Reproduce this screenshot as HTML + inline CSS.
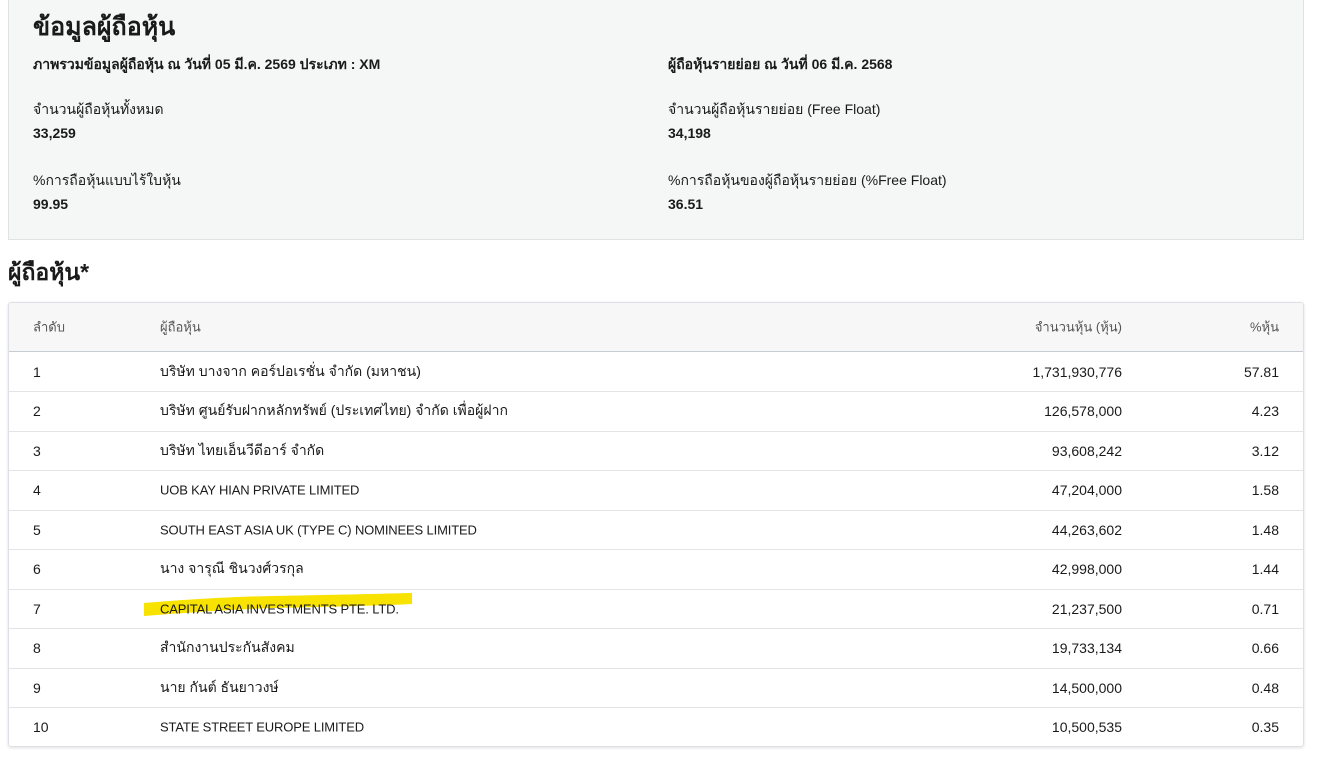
<!DOCTYPE html>
<html><head><meta charset="utf-8"><style>
body{margin:0;width:1330px;height:763px;background:#fff;font-family:"Liberation Sans","Noto Sans CJK SC",sans-serif;color:#1a1a1a;position:relative;overflow:hidden}
.box{position:absolute;left:8px;top:-2px;width:1294px;height:240px;background:#f5f6f6;border:1px solid #e0e2e4}
.t{position:absolute;white-space:nowrap}
.h1{font-size:25px;font-weight:bold}
.b{font-size:14px;font-weight:bold}
.n{font-size:14px}
.tbl{position:absolute;left:8px;top:302px;width:1294px;height:443px;border:1px solid #dde1e6;border-radius:3px;box-shadow:0 1px 3px rgba(0,0,0,.12);overflow:hidden}
.hd{position:absolute;left:0;top:0;width:100%;height:48px;background:#f7f7f8;border-bottom:1px solid #c6ccd4}
.row{position:absolute;left:0;width:100%;height:39px;border-bottom:1px solid #e2e4e7;font-size:14px}
.row span,.hd span{position:absolute;top:50%;transform:translateY(-50%);white-space:nowrap}
.hd span{font-size:13px;color:#555}
.c1{left:24px}.c2{left:151px}.c3{right:181px}.c4{right:24px}
.l{font-size:13px;letter-spacing:-0.15px}
</style></head><body>
<div class="box"></div>
<div class="t h1" style="left:33px;top:7px">ข้อมูลผู้ถือหุ้น</div>
<div class="t b" style="left:33px;top:54px">ภาพรวมข้อมูลผู้ถือหุ้น ณ วันที่ 05 มี.ค. 2569 ประเภท : XM</div>
<div class="t n" style="left:33px;top:99px">จำนวนผู้ถือหุ้นทั้งหมด</div>
<div class="t b" style="left:33px;top:125px">33,259</div>
<div class="t n" style="left:33px;top:170px">%การถือหุ้นแบบไร้ใบหุ้น</div>
<div class="t b" style="left:33px;top:196px">99.95</div>
<div class="t b" style="left:668px;top:54px">ผู้ถือหุ้นรายย่อย ณ วันที่ 06 มี.ค. 2568</div>
<div class="t n" style="left:668px;top:99px">จำนวนผู้ถือหุ้นรายย่อย (Free Float)</div>
<div class="t b" style="left:668px;top:125px">34,198</div>
<div class="t n" style="left:668px;top:170px">%การถือหุ้นของผู้ถือหุ้นรายย่อย (%Free Float)</div>
<div class="t b" style="left:668px;top:196px">36.51</div>
<div class="t h1" style="left:8px;top:255px;font-size:23px">ผู้ถือหุ้น*</div>
<div class="tbl">
<div class="hd"><span class="c1">ลำดับ</span><span class="c2">ผู้ถือหุ้น</span><span class="c3">จำนวนหุ้น (หุ้น)</span><span class="c4">%หุ้น</span></div>
<div class="row" style="top:49px"><span class="c1">1</span><span class="c2">บริษัท บางจาก คอร์ปอเรชั่น จำกัด (มหาชน)</span><span class="c3">1,731,930,776</span><span class="c4">57.81</span></div>
<div class="row" style="top:88.5px"><span class="c1">2</span><span class="c2">บริษัท ศูนย์รับฝากหลักทรัพย์ (ประเทศไทย) จำกัด เพื่อผู้ฝาก</span><span class="c3">126,578,000</span><span class="c4">4.23</span></div>
<div class="row" style="top:128px"><span class="c1">3</span><span class="c2">บริษัท ไทยเอ็นวีดีอาร์ จำกัด</span><span class="c3">93,608,242</span><span class="c4">3.12</span></div>
<div class="row" style="top:167.5px"><span class="c1">4</span><span class="c2 l">UOB KAY HIAN PRIVATE LIMITED</span><span class="c3">47,204,000</span><span class="c4">1.58</span></div>
<div class="row" style="top:207px"><span class="c1">5</span><span class="c2 l">SOUTH EAST ASIA UK (TYPE C) NOMINEES LIMITED</span><span class="c3">44,263,602</span><span class="c4">1.48</span></div>
<div class="row" style="top:246.5px"><span class="c1">6</span><span class="c2">นาง จารุณี ชินวงศ์วรกุล</span><span class="c3">42,998,000</span><span class="c4">1.44</span></div>
<div class="row" style="top:286px"><svg style="position:absolute;left:133px;top:3px" width="272" height="26"><path d="M2 11 C40 8 80 5 130 4 C180 3 230 2 270 1 L270 12 C230 14 180 15 130 16 C80 18 40 21 2 24 Z" fill="#f7e200"/></svg><span class="c1">7</span><span class="c2 l">CAPITAL ASIA INVESTMENTS PTE. LTD.</span><span class="c3">21,237,500</span><span class="c4">0.71</span></div>
<div class="row" style="top:325.5px"><span class="c1">8</span><span class="c2">สำนักงานประกันสังคม</span><span class="c3">19,733,134</span><span class="c4">0.66</span></div>
<div class="row" style="top:365px"><span class="c1">9</span><span class="c2">นาย กันต์ ธันยาวงษ์</span><span class="c3">14,500,000</span><span class="c4">0.48</span></div>
<div class="row" style="top:404.5px;border-bottom:none"><span class="c1">10</span><span class="c2 l">STATE STREET EUROPE LIMITED</span><span class="c3">10,500,535</span><span class="c4">0.35</span></div>
</div>
</body></html>
